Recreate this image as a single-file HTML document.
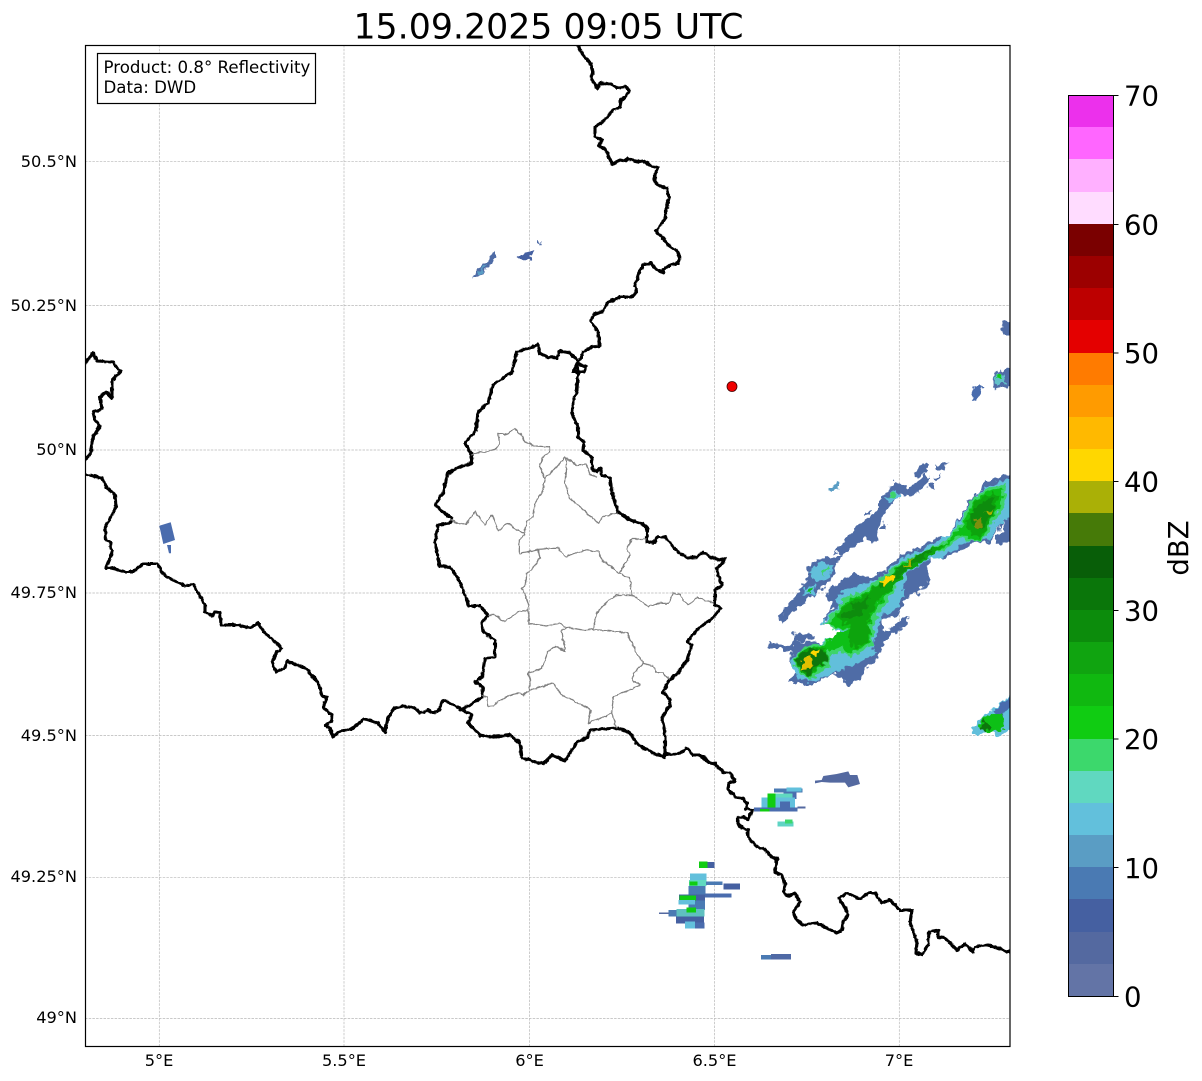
<!DOCTYPE html>
<html><head><meta charset="utf-8"><style>
html,body{margin:0;padding:0;background:#fff}
svg{display:block}
text{font-family:"DejaVu Sans",sans-serif;fill:#000}
.g{fill:none;stroke:#b8b8b8;stroke-width:.7;stroke-dasharray:2.5 1.2}
.b{fill:none;stroke:#000;stroke-width:3.1;stroke-linejoin:round;stroke-linecap:round}
.c{fill:none;stroke:#808080;stroke-width:3.8;stroke-linejoin:round}
.t{font-size:16.2px}
.lg{font-size:16.64px}
.l{font-size:27.5px}
</style></head><body>
<svg xmlns="http://www.w3.org/2000/svg" width="1202" height="1081" viewBox="0 0 1202 1081">
<defs>
<clipPath id="ax"><rect x="85.5" y="45.5" width="924.5" height="1001"/></clipPath>
<filter id="wig" filterUnits="userSpaceOnUse" x="0" y="0" width="1202" height="1081">
<feTurbulence type="fractalNoise" baseFrequency="0.22" numOctaves="2" seed="4" result="n"/>
<feDisplacementMap in="SourceGraphic" in2="n" scale="3.2" xChannelSelector="R" yChannelSelector="G"/>
</filter>
<filter id="rough" filterUnits="userSpaceOnUse" x="0" y="0" width="1202" height="1081">
<feTurbulence type="fractalNoise" baseFrequency="0.17" numOctaves="2" seed="9" result="n"/>
<feDisplacementMap in="SourceGraphic" in2="n" scale="9" xChannelSelector="R" yChannelSelector="G"/>
</filter>
</defs>
<rect width="1202" height="1081" fill="#fff"/>
<text x="548.5" y="38.5" font-size="34.75" text-anchor="middle">15.09.2025 09:05 UTC</text>
<g clip-path="url(#ax)">
<path class="g" d="M159.3 45V1046M344 45V1046M529.4 45V1046M714.4 45V1046M899.3 45V1046M85 161.3H1010M85 305.5H1010M85 450H1010M85 593H1010M85 735.5H1010M85 877.3H1010M85 1018.5H1010"/>

<!-- radar main -->
<g filter="url(#rough)">
<g transform="translate(760 460) scale(.33333)">
<polygon fill="#4f6ca6" points="25,545 60,548 100,560 100,520 158,522 162,538 115,545 190,546 210,543 245,528 300,502 185,492 222,430 198,420 212,382 280,342 330,352 360,342 420,285 480,262 530,232 562,236 600,168 630,118 680,66 740,42 755,45 755,252 705,248 720,192 690,248 640,248 560,292 512,297 500,340 514,360 470,403 445,403 412,468 362,482 372,518 445,462 442,492 372,542 362,582 332,612 302,642 298,658 265,676 252,662 220,643 160,673 120,668 82,664 108,640 88,600 98,577 60,562 25,572"/>
<polygon fill="#62bfdb" points="185,490 240,430 225,420 250,395 310,370 360,355 420,300 480,270 540,240 570,225 610,160 650,100 690,75 740,55 755,60 755,170 720,190 690,240 620,245 540,295 500,300 440,340 430,400 420,440 360,470 355,510 340,560 350,580 290,610 220,640 160,665 120,660 100,625 90,600 120,570 190,545 240,525 220,500"/>
<polygon fill="#3cd46a" points="190,490 240,440 240,420 290,400 340,370 420,310 500,270 560,240 600,190 640,110 690,80 740,70 735,130 700,190 670,240 640,245 600,235 550,270 480,300 420,350 400,400 352,465 338,505 342,552 300,578 270,592 250,575 215,582 208,620 150,660 120,640 95,600 130,560 190,548 230,530 270,510 230,510"/>
<polygon fill="#10c012" points="205,490 245,445 250,425 300,405 350,375 425,315 505,275 560,245 605,200 645,120 695,90 730,85 725,130 695,180 665,235 640,240 600,225 545,265 475,295 415,345 390,395 345,450 328,500 332,540 295,568 265,582 245,560 205,572 195,610 150,650 125,635 105,600 135,570 190,555 235,520 275,505 225,505"/>
<polygon fill="#10a410" points="230,470 260,430 320,400 360,370 430,320 510,270 555,250 520,285 440,335 380,400 340,440 330,470 310,490 250,490"/>
<polygon fill="#10a410" points="620,190 650,120 700,100 715,110 690,190 660,230 635,225"/>
<polygon fill="#10a410" points="100,600 140,565 195,565 210,590 165,630 150,655 125,635"/>
<polygon fill="#10a410" points="270,490 330,480 325,540 280,570 265,530"/>
<polygon fill="#0c8c0c" points="350,380 390,345 440,310 480,280 520,265 500,290 450,320 400,365 360,385"/>
<polygon fill="#0c8c0c" points="270,430 330,415 320,450 280,445"/>
<polygon fill="#0a760a" points="105,600 150,565 200,575 205,605 160,625 150,650 125,630"/>
<polygon fill="#0c8c0c" points="630,160 660,130 700,110 700,160 665,210 640,190"/>
<polygon fill="#0c8c0c" points="240,470 300,440 310,465 250,480"/>
<polygon fill="#ffd700" points="358,368 385,348 412,343 402,362 370,378"/>
<polygon fill="#aab006" points="428,320 465,293 447,320"/>
<polygon fill="#e0c000" points="133,590 157,593 157,627 123,630 128,615"/>
<polygon fill="#ffd700" points="153,570 177,570 172,584 153,584"/>
<polygon fill="#7d9008" points="643,192 660,168 667,202 650,207"/>
<polygon fill="#aab006" points="678,157 697,143 692,162"/>
<polygon fill="#fff" points="708,226 735,180 730,205 715,228"/>
<polygon fill="#4f6ca6" points="58,468 92,433 108,403 128,378 142,368 142,323 173,297 243,288 228,322 218,352 183,388 153,413 128,433 103,453 70,492"/>
<polygon fill="#4f6ca6" points="222,277 258,233 288,202 318,182 342,162 357,147 357,122 387,92 402,67 440,82 470,67 495,42 508,52 483,92 452,108 418,103 403,127 373,153 358,192 353,243 335,248 320,233 292,253 240,288"/>
<polygon fill="#62bfdb" points="143,340 180,308 218,318 208,352 170,367"/>
<polygon fill="#62bfdb" points="133,385 165,373 168,402 128,407"/>
<polygon fill="#62bfdb" points="378,117 410,88 418,110 385,132"/>
<polygon fill="#3cd46a" points="178,332 207,320 192,348"/>
<polygon fill="#10c012" points="138,392 162,383 152,402"/>
<polygon fill="#3cd46a" points="388,107 410,93 402,114"/>
<polygon fill="#4f6ca6" points="463,42 490,8 507,13 502,37 480,47 470,52"/>
<polygon fill="#4f6ca6" points="523,15 562,8 552,32 530,27"/>
<polygon fill="#4f6ca6" points="523,52 542,43 532,67"/>
<polygon fill="#4f6ca6" points="503,75 522,73 517,92"/>
<polygon fill="#5a9dc4" points="206,87 235,66 240,80 215,99"/>
<polygon fill="#4f6ca6" points="363,195 377,191 374,207 363,207"/>
<polygon fill="#4f6ca6" points="318,155 334,150 332,164 318,164"/>
</g>
<polygon fill="#4f6ca6" points="473,279 477,270 488,260 495,250 495,258 486,270 477,278"/>
<polygon fill="#5a9dc4" points="478,272 487,264 484,270 480,274"/>
<polygon fill="#4560a1" points="518,258 530,250 534,248 531,258 523,262"/>
<polygon fill="#4f6ca6" points="537,243 540,240 539,247"/>
<g transform="translate(960 310) scale(.33333)">
<polygon fill="#4f6ca6" points="120,35 150,30 155,75 130,75"/>
<polygon fill="#4f6ca6" points="96,233 105,190 125,178 155,175 155,233"/>
<polygon fill="#62c0c8" points="105,222 108,192 135,190 135,222"/>
<polygon fill="#10cc12" points="110,192 125,192 125,207 110,207"/>
<polygon fill="#4a6cae" points="45,225 68,225 52,270 37,270"/>
</g>
<g transform="translate(960 680) scale(.33333)">
<polygon fill="#62bfdb" points="35,160 60,120 155,45 155,145 115,170 90,150 50,165"/>
<polygon fill="#4a6cae" points="100,95 155,48 155,80 115,110"/>
<polygon fill="#10c012" points="55,140 75,110 125,100 135,150 80,155"/>
<polygon fill="#0a760a" points="60,145 75,120 90,140 75,155"/>
</g>
</g>

<!-- radar south -->
<g transform="translate(640 760) scale(.33333)" shape-rendering="crispEdges">
<rect x="177" y="304" width="25" height="20" fill="#10cc12"/><rect x="202" y="306" width="22" height="18" fill="#4560a1"/>
<rect x="145" y="403" width="50" height="47" fill="#4a7ab3"/>
<rect x="150" y="340" width="50" height="20" fill="#62c0dc"/><rect x="147" y="360" width="52" height="18" fill="#60d8c0"/><rect x="148" y="365" width="25" height="12" fill="#10cc12"/>
<rect x="145" y="378" width="52" height="25" fill="#4a7ab3"/>
<rect x="198" y="365" width="50" height="10" fill="#4a7ab3"/><rect x="250" y="370" width="50" height="18" fill="#4560a1"/><rect x="195" y="400" width="80" height="12" fill="#4a6cae"/>
<rect x="117" y="403" width="78" height="18" fill="#4560a1"/><rect x="118" y="407" width="50" height="14" fill="#10cc12"/>
<rect x="115" y="420" width="50" height="14" fill="#62c0dc"/>
<rect x="85" y="450" width="108" height="20" fill="#4a7ab3"/><rect x="57" y="457" width="30" height="5" fill="#5469a0"/><rect x="110" y="447" width="84" height="22" fill="#5fc0c0"/><rect x="140" y="442" width="28" height="15" fill="#10cc12"/>
<rect x="108" y="470" width="84" height="20" fill="#4560a1"/><rect x="135" y="485" width="30" height="20" fill="#62c0dc"/><rect x="165" y="488" width="28" height="18" fill="#4a6cae"/>
<rect x="402" y="85" width="85" height="12" fill="#4a7ab3"/><rect x="440" y="82" width="45" height="12" fill="#62c0dc"/>
<rect x="430" y="97" width="40" height="20" fill="#4a6cae"/>
<rect x="365" y="112" width="100" height="35" fill="#62c0dc"/><rect x="420" y="125" width="30" height="20" fill="#4a6cae"/><rect x="382" y="100" width="25" height="50" fill="#10cc12"/><rect x="407" y="100" width="50" height="12" fill="#60d8c0"/>
<rect x="342" y="143" width="130" height="12" fill="#4a6cae"/><rect x="360" y="147" width="28" height="8" fill="#10cc12"/><rect x="472" y="140" width="24" height="6" fill="#5469a0"/>
<rect x="412" y="185" width="48" height="15" fill="#5fd4c4"/><rect x="435" y="178" width="22" height="12" fill="#3cd86c"/>
<rect x="363" y="585" width="90" height="13" fill="#4a7ab3"/><rect x="393" y="582" width="60" height="16" fill="#4f69a5"/>
</g>
<g transform="translate(640 760) scale(.33333)">
<polygon fill="#5469a0" points="525,62 545,60 550,48 590,42 625,34 630,45 652,45 660,72 625,82 615,68 570,68 545,66 525,70"/>
</g>
<polygon fill="#4a6cae" points="159.3,525.7 170.7,522.3 175,540 163.3,544"/>
<polygon fill="#4a6cae" points="167,545 171,545 171,553.3 169,553.3"/>

<!-- borders -->
<g filter="url(#wig)">
<path class="b" d="M578 46L583 55L590 62L593 72L591 78L597 88L600 83L610 84L618 88L627 87L629 91L625 97L621 101L620 107L613 110L605 120L595 127L595 137L602 140L599 146L605 149L609 157L612 164L620 160L625 161L628 158L637 162L643 161L652 166L658 168L655 175L655 182L660 186L667 188L669 198L666 210L666 217L662 223L656 231L662 237L668 245L677 251L680 257L678 263L670 265L663 270L664 273L657 270L651 263L643 265L638 275L635 287L637 292L631 297L620 297L608 302L603 311L593 315L591 322L598 332L600 346L592 347L583 352L581 358L577 363L586 367L584 372L573 372L577 363L578 373L577 390L573 403L572 415L578 427L578 437L584 442L583 450L592 458L592 468L597 472L600 468L602 475L610 478L612 493L615 503L618 512L630 520L640 523L647 527L647 542L654 543L657 537L665 537L678 552L688 558L697 557L703 552L710 557L720 560L725 558L723 563L717 568L718 575L722 585L715 590L715 605L721 608L717 613L713 618L703 625L697 630L687 642L692 645L687 660L678 673L670 679L663 692L670 700L670 705L662 717L665 733L665 757"/>
<path class="b" d="M577 360L570 353L560 351L557 358L547 357L540 353L538 345L517 352L512 372L493 385L488 403L478 412L476 430L465 443L472 455L472 463L460 467L448 473L443 493L435 505L443 512L452 518L450 523L438 525L435 542L438 557L440 566L450 567L458 578L467 600L468 606L480 606L488 615L482 623L483 632L495 640L495 657L485 658L482 677L475 682L483 687L482 697L470 705L460 710"/>
<path class="b" d="M460 708L472 715L468 723L480 735L490 737L510 735L520 743L522 758L543 764L552 755L565 761L577 742L587 738L590 730L617 728L630 733L638 745L653 753L665 757"/>
<path class="b" d="M663 757L665 753L673 755L680 753L687 748L693 755L700 755L710 763L715 764L723 772L730 773L735 781L729 783L728 789L735 797L742 798L747 803L746 809L752 810L748 819L743 817L738 818L738 824L742 828L748 830L748 837L757 847L763 848L772 857L777 859L775 872L782 875L785 883L784 893L788 896L795 893L800 902L793 912L795 917L802 925L817 923L837 933L842 930L843 922L848 915L845 908L839 898L847 893L860 899L868 893L875 893L882 903L890 900L900 910L912 910L910 923L917 942L916 953L922 955L928 945L929 932L938 930L938 937L945 938L957 950L965 944L973 952L975 947L988 945L1000 949L1007 952L1012 950"/>
<path class="b" d="M85 363L93 353L97 361L113 362L117 368L121 371L112 380L112 398L106 392L100 397L102 409L93 412L95 420L100 426L93 437L90 455L85 460"/>
<path class="b" d="M85 474L102 478L107 488L115 495L116 507L105 528L106 540L110 542L112 553L106 568L112 568L125 572L133 572L143 564L157 564L165 576L185 586L193 584L205 605L205 612L212 616L215 611L220 613L221 625L237 625L250 628L258 623L263 631L282 648L277 652L272 662L276 672L285 668L287 661L305 668L318 682L322 696L327 698L323 707L332 715L331 722L325 725L330 728L333 737L338 732L353 728L364 719L378 723L385 732L388 718L395 708L403 706L415 708L420 713L428 710L433 713L439 710L443 700L460 708"/>
<!-- cantons -->
<g transform="translate(430 340) scale(.33333)">
<path class="c" d="M125 345L150 335L165 337L195 328L208 310L205 280L225 285L255 267L275 285L282 305L320 320L360 322L360 335L335 355L330 380L345 420L340 450L315 490L310 530L290 545L282 585L268 600L268 640L325 628L360 625L385 625L405 650L435 640L465 630L505 635L520 665L550 685L565 700L600 715L605 765L560 765L530 785L500 820L490 865"/>
<path class="c" d="M60 540L90 553L110 550L135 515L165 555L180 530L188 525L205 572L230 550L280 580"/>
<path class="c" d="M345 415L375 385L405 352L410 360L405 430L420 475L460 510L505 550L520 530L562 518"/>
<path class="c" d="M410 355L440 375L470 372L480 405L500 410"/>
<path class="c" d="M650 597L605 597L590 625L600 645L568 700"/>
<path class="c" d="M325 628L330 655L310 685L290 700L288 730L277 745L295 790L295 850L350 858L385 850L410 862L460 870L490 868L590 878L615 930L640 970L610 1000L608 1020L630 1035L610 1045L550 1070L545 1120L475 1150L482 1110L420 1075L405 1075L380 1045L370 1030L300 1050L300 1020L295 1000L335 985L355 935L375 918L405 933L395 870L410 862"/>
<path class="c" d="M295 810L265 815L225 845L195 825L175 825"/>
<path class="c" d="M605 765L655 800L690 790L715 790L730 760L750 765L775 795L800 772L850 790"/>
<path class="c" d="M640 970L670 978L680 998L700 998L718 1018"/>
<path class="c" d="M155 1065L172 1075L175 1100L190 1098L205 1085L240 1065L265 1060L280 1065L300 1050"/>
<path class="c" d="M545 1120L560 1165"/>
</g>
</g>
<circle cx="732" cy="386.5" r="5" fill="#f00000" stroke="#400" stroke-width=".8"/>
</g>
<rect x="85.5" y="45.5" width="924.5" height="1001" fill="none" stroke="#000" stroke-width="1.2"/>
<rect x="97.5" y="53.5" width="218" height="50" fill="#fff" stroke="#000" stroke-width="1.2"/>
<text class="lg" x="103.5" y="73">Product: 0.8° Reflectivity</text>
<text class="lg" x="103.5" y="93">Data: DWD</text>

<!-- axis labels -->
<g class="t" text-anchor="end">
<text x="77" y="167">50.5°N</text>
<text x="77" y="311">50.25°N</text>
<text x="77" y="455">50°N</text>
<text x="77" y="598">49.75°N</text>
<text x="77" y="741">49.5°N</text>
<text x="77" y="882">49.25°N</text>
<text x="77" y="1023">49°N</text>
</g>
<g class="t" text-anchor="middle">
<text x="159" y="1066">5°E</text>
<text x="344" y="1066">5.5°E</text>
<text x="529.5" y="1066">6°E</text>
<text x="714.5" y="1066">6.5°E</text>
<text x="899" y="1066">7°E</text>
</g>

<!-- colorbar -->
<g shape-rendering="crispEdges">
<rect x="1068" y="95" width="46" height="33" fill="#ec30ec"/>
<rect x="1068" y="127" width="46" height="33" fill="#ff66ff"/>
<rect x="1068" y="159" width="46" height="34" fill="#ffb0ff"/>
<rect x="1068" y="192" width="46" height="33" fill="#ffdcff"/>
<rect x="1068" y="224" width="46" height="33" fill="#7a0000"/>
<rect x="1068" y="256" width="46" height="33" fill="#9c0000"/>
<rect x="1068" y="288" width="46" height="33" fill="#bd0000"/>
<rect x="1068" y="320" width="46" height="34" fill="#e40000"/>
<rect x="1068" y="353" width="46" height="33" fill="#ff7b00"/>
<rect x="1068" y="385" width="46" height="33" fill="#ff9b00"/>
<rect x="1068" y="417" width="46" height="33" fill="#ffb900"/>
<rect x="1068" y="449" width="46" height="33" fill="#ffd700"/>
<rect x="1068" y="481" width="46" height="33" fill="#aab006"/>
<rect x="1068" y="513" width="46" height="34" fill="#467a08"/>
<rect x="1068" y="546" width="46" height="33" fill="#085e08"/>
<rect x="1068" y="578" width="46" height="33" fill="#0a760a"/>
<rect x="1068" y="610" width="46" height="33" fill="#0c8c0c"/>
<rect x="1068" y="642" width="46" height="33" fill="#10a410"/>
<rect x="1068" y="674" width="46" height="33" fill="#10b810"/>
<rect x="1068" y="706" width="46" height="34" fill="#10cc12"/>
<rect x="1068" y="739" width="46" height="33" fill="#3cd86c"/>
<rect x="1068" y="771" width="46" height="33" fill="#60d8c0"/>
<rect x="1068" y="803" width="46" height="33" fill="#62c0dc"/>
<rect x="1068" y="835" width="46" height="33" fill="#5a9dc4"/>
<rect x="1068" y="867" width="46" height="33" fill="#4a7ab3"/>
<rect x="1068" y="899" width="46" height="34" fill="#4560a1"/>
<rect x="1068" y="932" width="46" height="33" fill="#5469a0"/>
<rect x="1068" y="964" width="46" height="33" fill="#6374a6"/>
</g>
<rect x="1068.5" y="95.5" width="45" height="901" fill="none" stroke="#000" stroke-width="1"/>
<path stroke="#000" stroke-width="1" d="M1113.5 95.5h5M1113.5 224.5h5M1113.5 353h5M1113.5 481.5h5M1113.5 610.5h5M1113.5 739h5M1113.5 867.5h5M1113.5 996.5h5"/>
<g class="l">
<text x="1124" y="105.5">70</text>
<text x="1124" y="234.5">60</text>
<text x="1124" y="363">50</text>
<text x="1124" y="491.5">40</text>
<text x="1124" y="620.5">30</text>
<text x="1124" y="749">20</text>
<text x="1124" y="878">10</text>
<text x="1124" y="1006.5">0</text>
</g>
<text transform="translate(1188 548) rotate(-90)" font-size="27.5" text-anchor="middle">dBZ</text>
</svg>
</body></html>
